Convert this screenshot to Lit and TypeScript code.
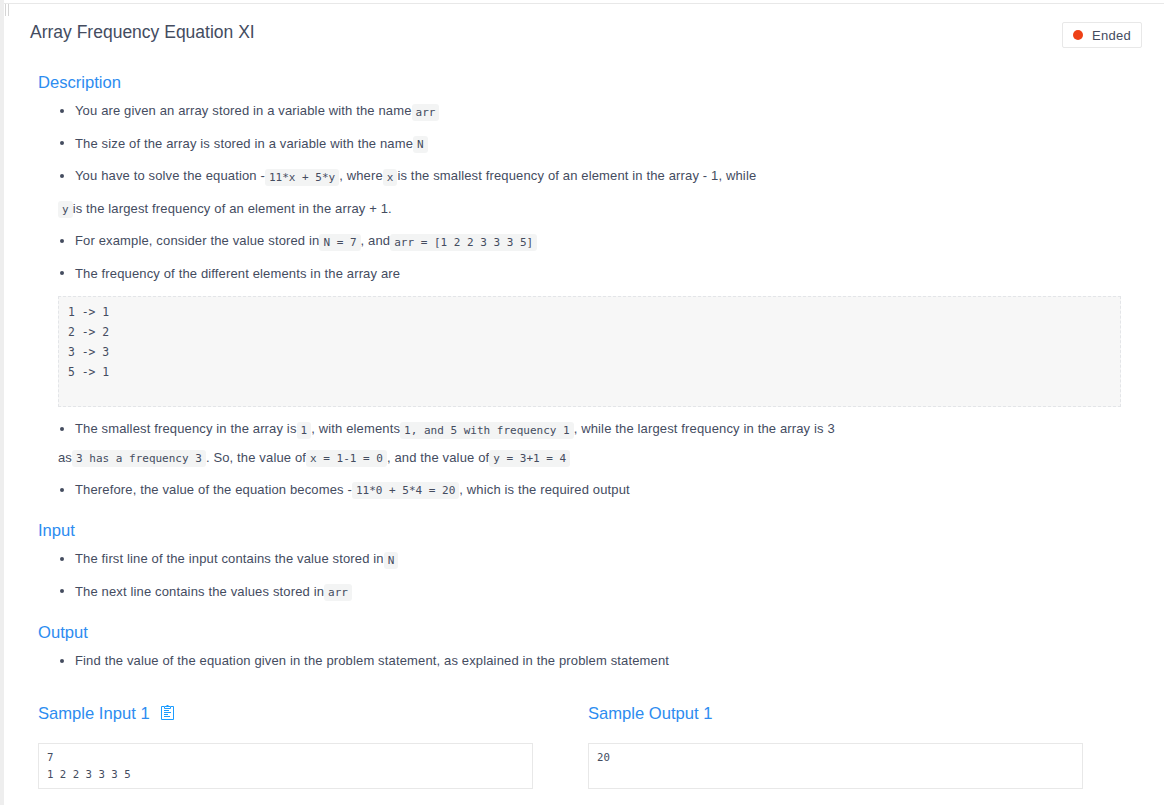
import { LitElement, html, css } from "lit";
import { customElement } from "lit/decorators.js";

@customElement("app-root")
export class AppRoot extends LitElement {
  static styles = css`
    :host {
      display: flex;
      height: 805px;
      overflow: hidden;
      background: #fff;
      color: #444c5f;
      font: 13px/32.5px "Liberation Sans", Arial, sans-serif;
    }
    * { box-sizing: border-box; }
    .rail { width: 4px; flex: none; background: #eee; }
    .page { flex: 1; min-width: 0; padding-top: 3px; }
    .top { height: 14px; border-top: 1px solid #e8e8e8; padding-left: 1px; }
    .grip { width: 4px; height: 12px; border: solid #d5d5d5; border-width: 0 1px; }
    .head { display: flex; justify-content: space-between; height: 54px; padding: 0 22px 0 26px; }
    h1 { margin: 3px 0 0; font-size: 17.5px; line-height: 24px; font-weight: 400; white-space: nowrap; }
    .status {
      display: flex; align-items: center; gap: 9px;
      width: 80px; height: 26px; margin-top: 5px; padding-left: 10px;
      border: 1px solid #e8e8e8; border-radius: 2px;
      font-size: 13px; line-height: 24px; letter-spacing: 0.3px;
    }
    .status span:last-child { padding-top: 1px; }
    .dot { width: 10px; height: 10px; border-radius: 50%; background: #ee4016; }
    .body { padding: 0 43px 0 34px; }
    h2 { margin: 0; font-size: 16.6px; line-height: 24px; font-weight: 400; color: #2d8cf0; white-space: nowrap; }
    ul { margin: 0; padding: 0 0 0 20px; list-style: none; letter-spacing: 0.145px; }
    li { white-space: nowrap; }
    .row { height: 32.5px; }
    .row.tight { height: 29px; }
    .row.last { height: 32px; }
    .bullet { display: inline-block; width: 4px; height: 4px; margin: 0 11px 2px 2px; border-radius: 50%; background: #444c5f; vertical-align: middle; }
    code, pre { font-family: "DejaVu Sans Mono", monospace; letter-spacing: 0; }
    code {
      padding: 2px 4px; border-radius: 3px; background: #f3f4f4;
      font-size: 11px; line-height: 13px; position: relative; top: 1px;
    }
    .lift code { top: 0; }
    .block {
      margin: 6px 0; height: 111px; padding: 5px 9px; background: #f7f7f7;
      border: 1px dashed #e3e5e8; font-size: 11.4px; line-height: 20px;
    }
    .input { margin-top: 12.5px; }
    .output { margin-top: 13px; }
    .samples { display: flex; gap: 55px; margin-top: 24.5px; }
    .sample { width: 495px; }
    .title { display: flex; align-items: flex-start; height: 24px; gap: 12px; }
    .title span { width: 111px; }
    .title svg { margin-top: 3px; }
    .sample pre {
      height: 46px; margin: 17px 0 0; padding: 5px 8px;
      border: 1px solid #e8e8e8; font-size: 10.7px; line-height: 17px;
    }
  `;

  render() {
    const b = html`<span class="bullet"></span>`;
    return html`
      <div class="rail"></div>
      <div class="page">
        <div class="top"><div class="grip"></div></div>
        <div class="head">
          <h1>Array Frequency Equation XI</h1>
          <div class="status"><span class="dot"></span><span>Ended</span></div>
        </div>
        <div class="body">
          <h2>Description</h2>
          <ul>
            <li class="row">${b}You are given an array stored in a variable with the name<code>arr</code></li>
            <li class="row lift">${b}The size of the array is stored in a variable with the name<code>N</code></li>
            <li>
              <div class="row">${b}You have to solve the equation -<code>11*x + 5*y</code>, where<code>x</code>is the smallest frequency of an element in the array - 1, while</div>
              <div class="row lift"><code>y</code>is the largest frequency of an element in the array + 1.</div>
            </li>
            <li class="row">${b}For example, consider the value stored in<code>N = 7</code>, and<code>arr = [1 2 2 3 3 3 5]</code></li>
            <li class="row">${b}The frequency of the different elements in the array are</li>
          <pre class="block">1 -&gt; 1
2 -&gt; 2
3 -&gt; 3
5 -&gt; 1
</pre>
            <li>
              <div class="row tight">${b}The smallest frequency in the array is<code>1</code>, with elements<code>1, and 5 with frequency 1</code>, while the largest frequency in the array is 3</div>
              <div class="row last lift">as<code>3 has a frequency 3</code>. So, the value of<code>x = 1-1 = 0</code>, and the value of<code>y = 3+1 = 4</code></div>
            </li>
            <li class="row lift">${b}Therefore, the value of the equation becomes -<code>11*0 + 5*4 = 20</code>, which is the required output</li>
          </ul>
          <h2 class="input">Input</h2>
          <ul>
            <li class="row">${b}The first line of the input contains the value stored in<code>N</code></li>
            <li class="row lift">${b}The next line contains the values stored in<code>arr</code></li>
          </ul>
          <h2 class="output">Output</h2>
          <ul>
            <li class="row">${b}Find the value of the equation given in the problem statement, as explained in the problem statement</li>
          </ul>
          <div class="samples">
            <div class="sample">
              <h2 class="title"><span>Sample Input 1</span>
                <svg width="13" height="16" viewBox="0 0 13 16" fill="none" stroke="#1c9cff">
                  <path d="M3 1.5H.5v13h12v-13H10M3.5 1.5h6v2h-6zM5.5.5h2M3 5.5h5M3 7.5h7M3 9.5h4M3 11.5h6" />
                </svg>
              </h2>
              <pre>7
1 2 2 3 3 3 5</pre>
            </div>
            <div class="sample">
              <h2>Sample Output 1</h2>
              <pre>20</pre>
            </div>
          </div>
        </div>
      </div>
    `;
  }
}
